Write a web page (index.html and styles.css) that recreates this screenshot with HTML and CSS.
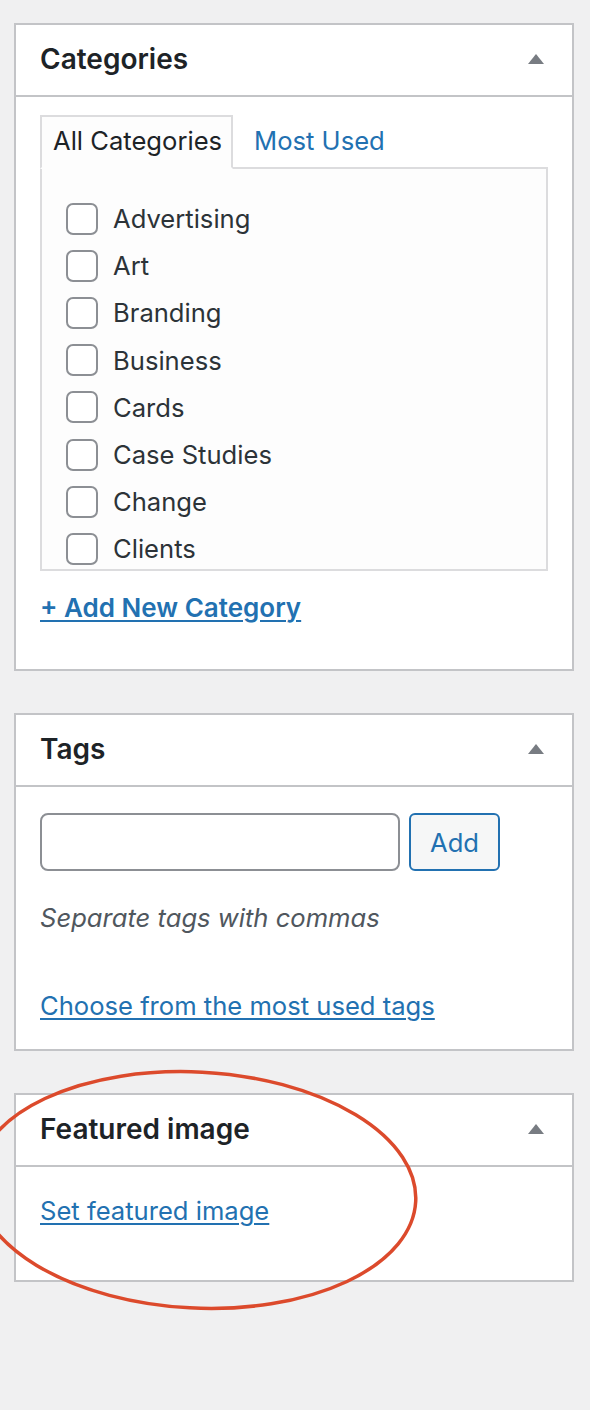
FILE: index.html
```html
<!DOCTYPE html>
<html>
<head>
<meta charset="utf-8">
<link rel="stylesheet" href="styles.css">
</head>
<body>
<div class="sidebar">
  <section class="postbox cats">
    <div class="postbox-header">
      <h2>Categories</h2>
      <span class="toggle"></span>
    </div>
    <div class="inside">
      <div class="tabs">
        <span class="tab active">All Categories</span>
        <span class="tab link">Most Used</span>
      </div>
      <div class="tabs-panel">
        <ul class="checklist">
          <li><span class="cb"></span>Advertising</li>
          <li><span class="cb"></span>Art</li>
          <li><span class="cb"></span>Branding</li>
          <li><span class="cb"></span>Business</li>
          <li><span class="cb"></span>Cards</li>
          <li><span class="cb"></span>Case Studies</li>
          <li><span class="cb"></span>Change</li>
          <li><span class="cb"></span>Clients</li>
        </ul>
      </div>
      <a class="add-new" href="#">+ Add New Category</a>
    </div>
  </section>

  <section class="postbox tags">
    <div class="postbox-header">
      <h2>Tags</h2>
      <span class="toggle"></span>
    </div>
    <div class="inside">
      <div class="tag-row">
        <span class="tag-input"></span>
        <span class="tag-btn">Add</span>
      </div>
      <p class="howto">Separate tags with commas</p>
      <a class="plain-link" href="#">Choose from the most used tags</a>
    </div>
  </section>

  <section class="postbox featured">
    <div class="postbox-header">
      <h2>Featured image</h2>
      <span class="toggle"></span>
    </div>
    <div class="inside">
      <a class="plain-link" href="#">Set featured image</a>
    </div>
  </section>
</div>
<svg class="circle" width="590" height="300" viewBox="0 1050 590 300">
  <ellipse cx="196" cy="1190" rx="220" ry="118" transform="rotate(3 196 1190)" fill="none" stroke="#dc4a2c" stroke-width="3.5"/>
</svg>
</body>
</html>
```

FILE: styles.css
```css
* { box-sizing: border-box; }
html, body {
  margin: 0;
  padding: 0;
  background: #f0f0f1;
}
body {
  width: 590px;
  height: 1410px;
  position: relative;
  overflow: hidden;
  font-family: Inter, "Noto Sans", Roboto, sans-serif;
  color: #1d2327;
}
.sidebar {
  padding: 23px 16px 0 14px;
  display: flex;
  flex-direction: column;
  gap: 42px;
}
.postbox {
  width: 560px;
  background: #fff;
  border: 2px solid #c3c4c7;
}
.postbox-header {
  height: 72px;
  border-bottom: 2px solid #c3c4c7;
  display: flex;
  align-items: center;
  justify-content: space-between;
  padding: 0 28px 2px 24px;
}
.postbox-header h2 {
  margin: 0;
  font-size: 28px;
  font-weight: 600;
  color: #1d2327;
}
.toggle {
  width: 0;
  height: 0;
  border-left: 8px solid transparent;
  border-right: 8px solid transparent;
  border-bottom: 10px solid #787c82;
}
.inside {
  padding: 0 24px;
}
/* Categories */
.cats .inside {
  padding-top: 18px;
  height: 572px;
}
.tabs {
  display: flex;
  align-items: flex-end;
  height: 54px;
  position: relative;
  z-index: 1;
  margin-bottom: -2px;
}
.tab {
  font-size: 25.6px;
  height: 54px;
  display: flex;
  align-items: center;
  white-space: nowrap;
}
.tab.active {
  border: 2px solid #dcdcde;
  border-bottom: 2px solid #fdfdfd;
  background: #fdfdfd;
  padding: 0 9px 4px 11px;
  color: #1d2327;
}
.tab.link {
  color: #2271b1;
  padding: 0 0 4px 21px;
}
.tabs-panel {
  width: 508px;
  height: 404px;
  border: 2px solid #dcdcde;
  background: #fdfdfd;
  overflow: hidden;
  padding: 26px 24px 0 24px;
}
.checklist {
  list-style: none;
  margin: 0;
  padding: 0;
}
.checklist li {
  height: 47.2px;
  display: flex;
  align-items: center;
  font-size: 25.6px;
  color: #2c3338;
}
.cb {
  width: 32px;
  height: 32px;
  border: 2px solid #8c8f94;
  border-radius: 7px;
  background: #fff;
  margin-right: 15px;
  flex: none;
}
.add-new {
  display: inline-block;
  margin-top: 21px;
  font-size: 26px;
  font-weight: 600;
  color: #2271b1;
  text-decoration: underline;
  text-underline-offset: 3px;
  text-decoration-thickness: 2px;
}
/* Tags */
.tags .inside {
  padding-top: 26px;
  height: 262px;
}
.tag-row {
  display: flex;
  gap: 9px;
}
.tag-input {
  width: 360px;
  height: 58px;
  border: 2px solid #8c8f94;
  border-radius: 8px;
  background: #fff;
}
.tag-btn {
  width: 91px;
  height: 58px;
  border: 2px solid #2271b1;
  border-radius: 6px;
  background: #f6f7f7;
  color: #2271b1;
  font-size: 25.6px;
  display: flex;
  align-items: center;
  justify-content: center;
}
.howto {
  margin: 31px 0 0;
  font-size: 25.6px;
  font-style: italic;
  color: #50575e;
  line-height: 32px;
}
.plain-link {
  display: inline-block;
  font-size: 25.6px;
  color: #2271b1;
  text-decoration: underline;
  text-underline-offset: 3px;
  text-decoration-thickness: 2px;
  line-height: 32px;
}
.tags .plain-link {
  margin-top: 56px;
}
/* Featured */
.featured .inside {
  padding-top: 28px;
  height: 113px;
}
.circle {
  position: absolute;
  left: 0;
  top: 1050px;
  pointer-events: none;
}
```
